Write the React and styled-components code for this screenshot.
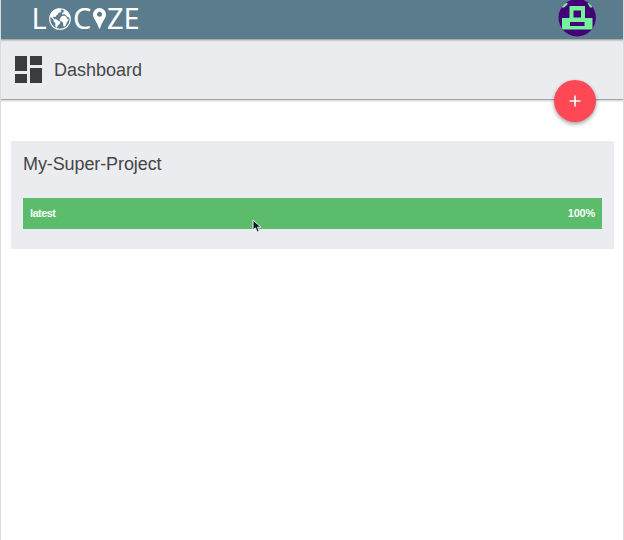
import React from 'react';
import styled, { createGlobalStyle } from 'styled-components';

const GlobalStyle = createGlobalStyle`
  * { box-sizing: border-box; }
  body { margin: 0; background: #fff; font-family: "Liberation Sans", Arial, sans-serif; }
`;

const Page = styled.div`
  height: 540px;
  border-left: 1px solid #d9dadb;
  border-right: 1px solid #d9dadb;
  overflow: hidden;
`;

const TopBar = styled.header`
  position: relative;
  display: flex;
  justify-content: space-between;
  height: 39px;
  margin: 0 -1px;
  padding: 0 28px 0 32px;
  background: #5b7c8c;
  box-shadow: 0 1px 2px rgba(0, 0, 0, 0.4);
`;

const Logo = styled.div`
  display: flex;
  align-items: center;
  height: 37px;
  color: #fff;
  svg { display: block; flex: none; }
`;

const Letter = styled.span`
  width: ${(p) => p.$width}px;
  padding-bottom: 2px;
  font: 400 29px/35px "Noto Sans", "Open Sans", sans-serif;
  white-space: nowrap;
  text-indent: ${(p) => p.$shift || 0}px;
`;

const Avatar = styled.svg`
  display: block;
  width: 38px;
  height: 38px;
  margin-top: -1px;
`;

const TitleBar = styled.section`
  display: flex;
  align-items: center;
  justify-content: space-between;
  height: 61px;
  margin-left: -1px;
  padding: 0 27px 0 15px;
  background: #ebecef;
  border-bottom: 1px solid #a4a5a7;
  box-shadow: 0 1px 2px rgba(0, 0, 0, 0.2), inset 1px 0 #d9dadb;
`;

const Heading = styled.div`
  display: flex;
  align-items: center;
  gap: 12px;
`;

const PageTitle = styled.h1`
  margin: 0;
  padding-top: 2px;
  color: #47484a;
  font-size: 18px;
  font-weight: 400;
  line-height: 24px;
  letter-spacing: -0.01px;
`;

const AddButton = styled.button`
  position: relative;
  top: 31.5px;
  display: grid;
  place-items: center;
  width: 42px;
  height: 42px;
  padding: 0;
  border: 0;
  border-radius: 50%;
  background: #ff4855;
  box-shadow: 0 2px 4px rgba(0, 0, 0, 0.38);
`;

const Card = styled.article`
  height: 108px;
  margin: 41px 9px 0 10px;
  padding: 11px 12px 0;
  background: #ebecef;
`;

const CardTitle = styled.h2`
  margin: 0 0 22px;
  color: #444546;
  font-size: 18px;
  font-weight: 400;
  line-height: 24px;
  letter-spacing: -0.1px;
`;

const Progress = styled.div`
  position: relative;
  display: flex;
  align-items: center;
  justify-content: space-between;
  height: 31px;
  padding: 0 7px 1px 7px;
  background: #5bbd6b;
  color: #f5fff6;
  font-size: 11px;
  font-weight: 700;
`;

const Label = styled.span`
  letter-spacing: ${(p) => p.$spacing}px;
`;

const Pointer = styled.svg`
  position: absolute;
  left: 229px;
  top: 21px;
  width: 10px;
  height: 14px;
`;

export default function App() {
  return (
    <>
      <GlobalStyle />
      <Page>
        <TopBar>
          <Logo>
            <Letter $width={17} $shift={-0.5}>L</Letter>
            <svg width="22" height="22" viewBox="0 0 22 22">
              <circle cx="11" cy="11" r="10.3" fill="none" stroke="#fff" strokeWidth="1.1" />
              <path fill="#fff" d="M1.2 8C2 4.2 5 1.2 9.3.6l2.8.3-.5 1.5 1.2.7-1.6 1.5-1.7.1-.8 2-1.5.8-.3 1.5-2-.5-.8 1 .8 1.4 2.3.3 2.6 1.7 1.7 1-1.1 2.3-1.5 1-.8 2-.9.8-.9-1.8.1-2.9-1.8-1.7.1-1.6-1.5-1.5Z" />
              <path fill="#fff" d="m14.3 2.4 2.5.1 2.8 3 1.4 4-.6 1.5-1.2-2.2-1 .1-.8-1.3-1.4-.5-.7-1.2-1.3.7-1.1-.6.5-1.3 1.4-.4Z" />
              <path fill="#fff" d="m12.8 8.1 2.4-.4 2 1 .9 2 1.6.7-1 2-1 .8-.3 2-1.8 2.5-1.3-.5-.2-3.2-1-1.4-1.7-.4-.8-2Z" />
            </svg>
            <Letter $width={22} $shift={2}>C</Letter>
            <svg width="13" height="21" viewBox="0 0 13 21">
              <path fill="#fff" fillRule="evenodd" d="M6.5 0A6.5 6.3 0 0 0 0 6.4C0 10.5 4 13.2 5.8 20c.3 1 1.1 1 1.4 0C9 13.2 13 10.5 13 6.4A6.5 6.3 0 0 0 6.5 0Zm0 3.8a2.5 2.5 0 1 1 0 5 2.5 2.5 0 0 1 0-5Z" />
            </svg>
            <Letter $width={17} $shift={1}>Z</Letter>
            <Letter $width={17} $shift={0.5}>E</Letter>
          </Logo>
          <Avatar viewBox="0 0 38 38">
            <clipPath id="avatar-circle"><circle cx="19.2" cy="18.7" r="18.7" /></clipPath>
            <g clipPath="url(#avatar-circle)">
              <path fill="#450077" d="M0 0h38v38H0z" />
              <path fill="#74f29c" d="M4 4h5.5v1.5L6 8.5H4zM29.5 4H34v4.5h-2z" />
              <path fill="#74f29c" fillRule="evenodd" d="M11.5 7H27v12h7.5v11.5H4V19h7.5ZM15.500 11.500v7h7.500v-7ZM12 23v4h14.500v-4Z" />
            </g>
          </Avatar>
        </TopBar>
        <TitleBar>
          <Heading>
            <svg width="27" height="27" viewBox="0 0 27 27">
              <path fill="#3a3c3d" d="M0 0h12v15H0zM15 0h12v9H15zM0 18h12v9H0zM15 12h12v15H15z" />
            </svg>
            <PageTitle>Dashboard</PageTitle>
          </Heading>
          <AddButton aria-label="Add">
            <svg width="12" height="12" viewBox="0 0 12 12">
              <path stroke="#fff" strokeWidth="1.6" d="M6 .5v11M.5 6h11" />
            </svg>
          </AddButton>
        </TitleBar>
        <Card>
          <CardTitle>My-Super-Project</CardTitle>
          <Progress>
            <Label $spacing={-0.55}>latest</Label>
            <Label $spacing={-0.25}>100%</Label>
            <Pointer viewBox="0 0 10 14">
              <path fill="#17152c" stroke="#e8eee9" strokeWidth="1" d="M1 1v10l2.4-2.1L5.2 13l2-.9L5.500 8.200H9Z" />
            </Pointer>
          </Progress>
        </Card>
      </Page>
    </>
  );
}
